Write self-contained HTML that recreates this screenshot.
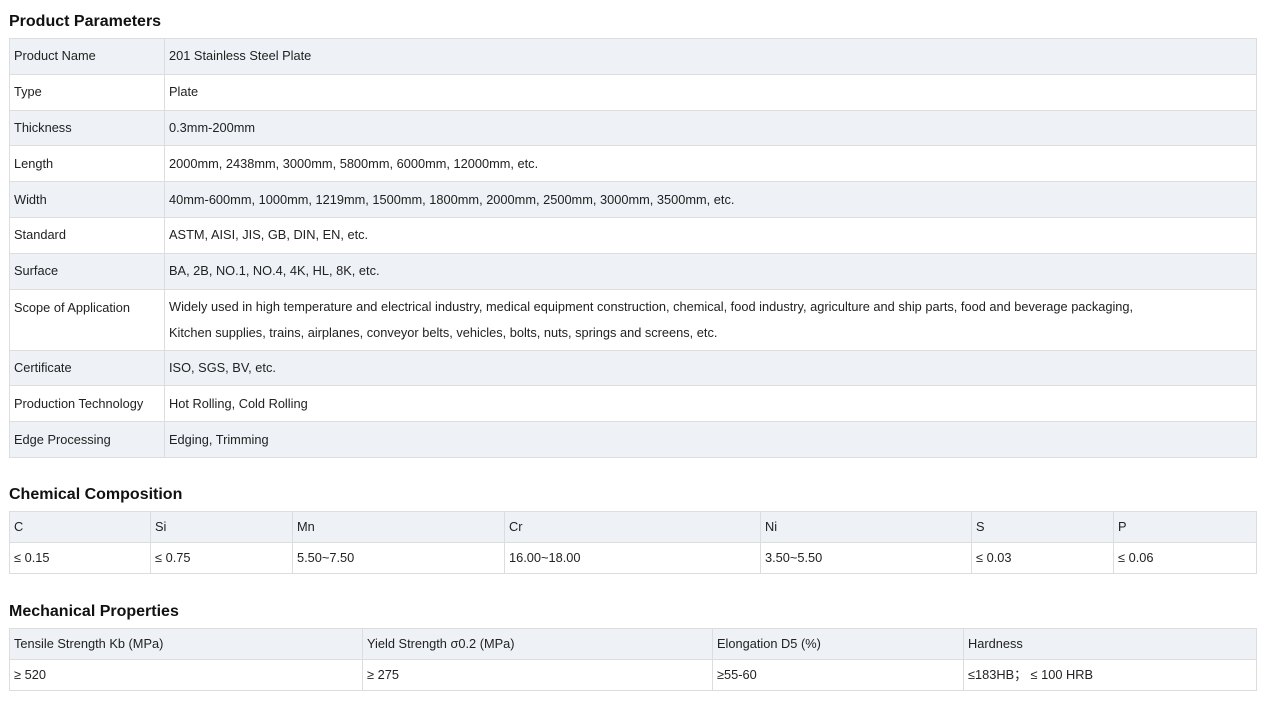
<!DOCTYPE html>
<html><head><meta charset="utf-8"><style>
body{margin:0;background:#fff;font-family:"Liberation Sans",Arial,sans-serif;color:#222;width:1265px;height:710px;overflow:hidden;position:relative}
h3{position:absolute;left:9px;margin:0;font-size:16px;font-weight:bold;color:#111}
table{position:absolute;left:9px;width:1248px;border-collapse:collapse;table-layout:fixed;font-size:12.8px}
td{border:1px solid #ddd;padding:0 4px;vertical-align:middle;line-height:24px}
tr.g td{background:#eef1f6}
#t1 td{height:34.8px}
#t2 td,#t3 td{height:30px}
#t1 td.s{height:54px;vertical-align:top;padding-top:6px;line-height:26px}
</style></head><body>
<h3 style="top:13px">Product Parameters</h3>
<table id="t1" style="top:38px">
<colgroup><col style="width:155px"><col></colgroup>
<tr class="g"><td>Product Name</td><td>201 Stainless Steel Plate</td></tr>
<tr><td>Type</td><td>Plate</td></tr>
<tr class="g"><td>Thickness</td><td>0.3mm-200mm</td></tr>
<tr><td>Length</td><td>2000mm, 2438mm, 3000mm, 5800mm, 6000mm, 12000mm, etc.</td></tr>
<tr class="g"><td>Width</td><td>40mm-600mm, 1000mm, 1219mm, 1500mm, 1800mm, 2000mm, 2500mm, 3000mm, 3500mm, etc.</td></tr>
<tr><td>Standard</td><td>ASTM, AISI, JIS, GB, DIN, EN, etc.</td></tr>
<tr class="g"><td>Surface</td><td>BA, 2B, NO.1, NO.4, 4K, HL, 8K, etc.</td></tr>
<tr><td class="s" style="line-height:24px">Scope of Application</td><td class="s" style="padding-top:4px;height:56px">Widely used in high temperature and electrical industry, medical equipment construction, chemical, food industry, agriculture and ship parts, food and beverage packaging,<br>Kitchen supplies, trains, airplanes, conveyor belts, vehicles, bolts, nuts, springs and screens, etc.</td></tr>
<tr class="g"><td>Certificate</td><td>ISO, SGS, BV, etc.</td></tr>
<tr><td>Production Technology</td><td>Hot Rolling, Cold Rolling</td></tr>
<tr class="g"><td>Edge Processing</td><td>Edging, Trimming</td></tr>
</table>
<h3 style="top:486px">Chemical Composition</h3>
<table id="t2" style="top:511px">
<colgroup><col style="width:141px"><col style="width:142px"><col style="width:212px"><col style="width:256px"><col style="width:211px"><col style="width:142px"><col></colgroup>
<tr class="g"><td>C</td><td>Si</td><td>Mn</td><td>Cr</td><td>Ni</td><td>S</td><td>P</td></tr>
<tr><td>≤ 0.15</td><td>≤ 0.75</td><td>5.50~7.50</td><td>16.00~18.00</td><td>3.50~5.50</td><td>≤ 0.03</td><td>≤ 0.06</td></tr>
</table>
<h3 style="top:603px">Mechanical Properties</h3>
<table id="t3" style="top:628px">
<colgroup><col style="width:353px"><col style="width:350px"><col style="width:251px"><col></colgroup>
<tr class="g"><td>Tensile Strength Kb (MPa)</td><td>Yield Strength σ0.2 (MPa)</td><td>Elongation D5 (%)</td><td>Hardness</td></tr>
<tr><td>≥ 520</td><td>≥ 275</td><td>≥55-60</td><td>≤183HB； ≤ 100 HRB</td></tr>
</table>
</body></html>
